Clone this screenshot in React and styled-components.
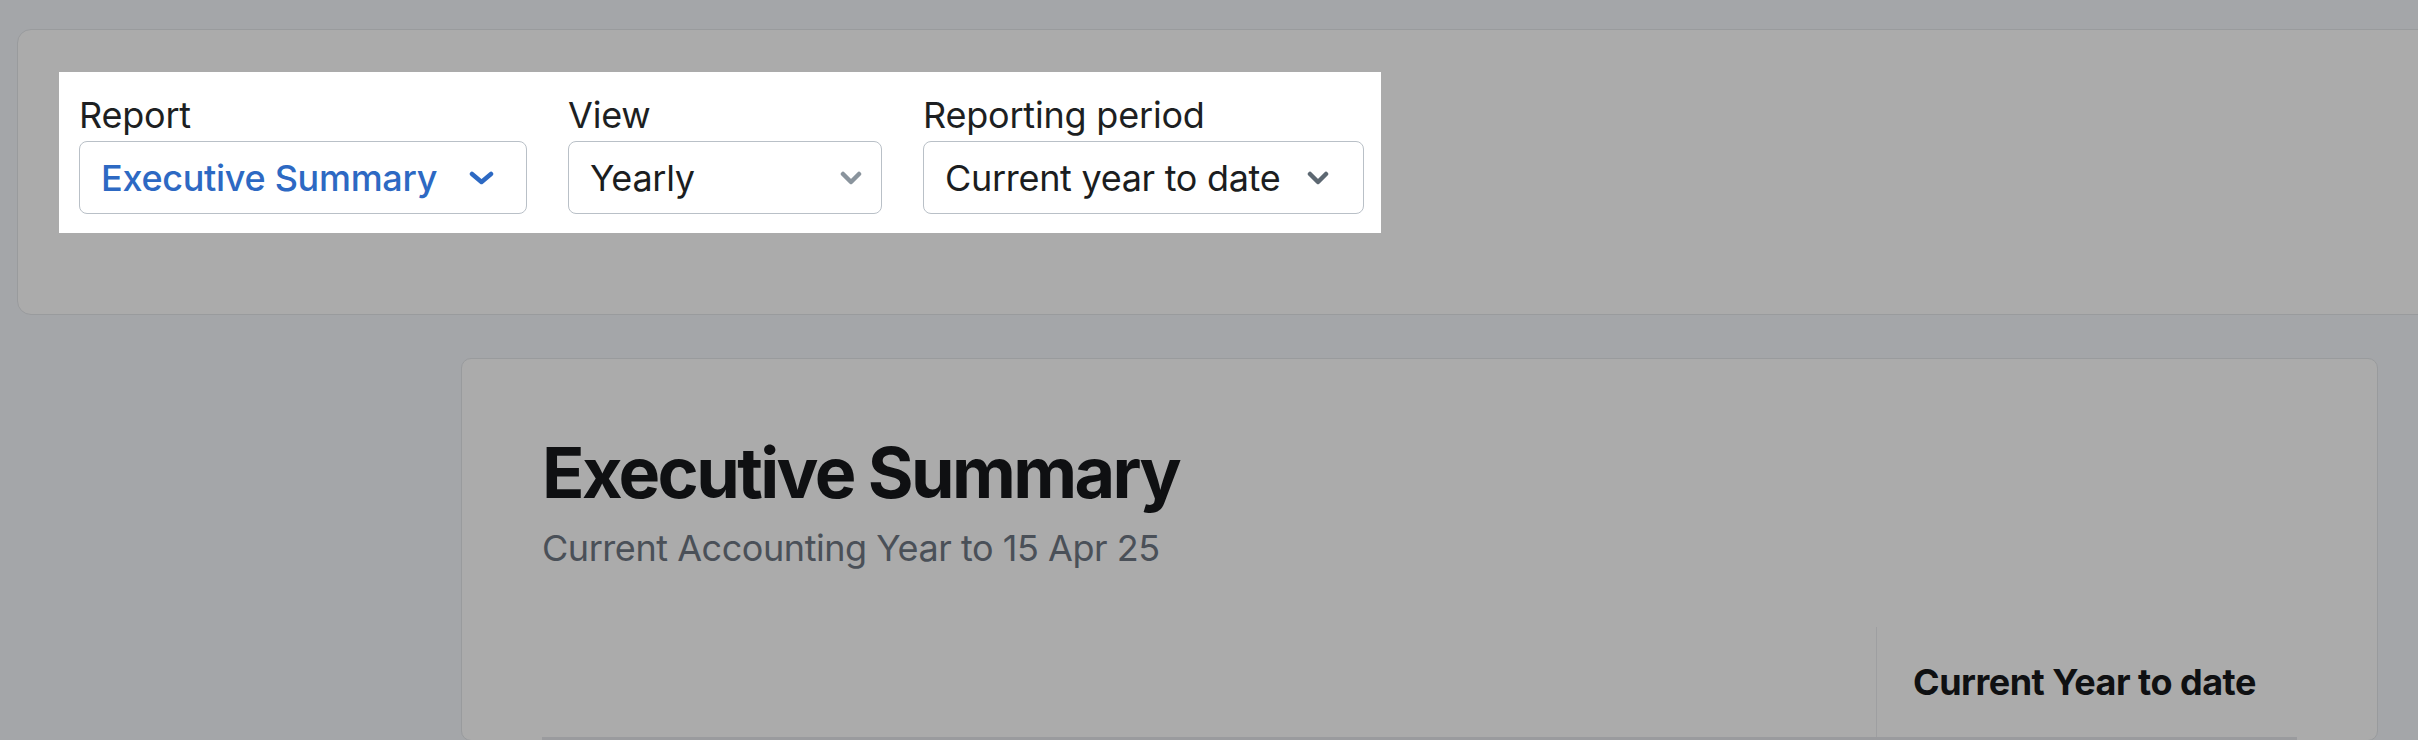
import React from 'react'
import styled, { createGlobalStyle } from 'styled-components'

const GlobalStyle = createGlobalStyle`
  html, body {
    margin: 0;
    padding: 0;
    overflow: hidden;
  }
  body {
    background: #f5f8fc;
    font-family: 'Inter', 'Noto Sans', sans-serif;
    color: #1b1d20;
  }
`

const Page = styled.div`
  min-height: 740px;
`

const FilterPanel = styled.section`
  box-sizing: border-box;
  height: 286px;
  margin: 29px -40px 0 17px;
  padding: 42px 41px;
  background: #ffffff;
  border: 1px solid #e4e7eb;
  border-radius: 14px;
`

// the highlighted block of a product tour: everything else is dimmed by its shadow
const Spotlight = styled.div`
  position: relative;
  z-index: 2;
  display: flex;
  gap: 41px;
  width: 1322px;
  box-sizing: border-box;
  padding: 21px 17px 19px 20px;
  background: #ffffff;
  box-shadow: 0 0 0 4000px rgba(0, 0, 0, 0.33);
`

const Field = styled.div`
  display: flex;
  flex-direction: column;
  gap: 4px;
  width: ${(p) => p.$width}px;
`

const Label = styled.label`
  font-size: 36px;
  line-height: 44px;
  letter-spacing: -0.2px;
  color: #1d1f22;
`

const Select = styled.div`
  box-sizing: border-box;
  height: 73px;
  display: flex;
  align-items: center;
  justify-content: space-between;
  padding: 0 ${(p) => p.$padRight}px 0 21px;
  border: 1.5px solid #b9c0c7;
  border-radius: 8px;
  background: #ffffff;
  font-size: 36px;
  letter-spacing: -0.3px;
  font-weight: ${(p) => (p.$accent ? 500 : 400)};
  color: ${(p) => (p.$accent ? '#2d69c3' : '#1b1d20')};
`

const Chevron = ({ color, width }) => (
  <svg width={width} height="14" viewBox={`0 0 ${width} 14`} fill="none">
    <path
      d={`M3 3 L${width / 2} 11 L${width - 3} 3`}
      stroke={color}
      strokeWidth="4.5"
      strokeLinecap="round"
      strokeLinejoin="round"
    />
  </svg>
)

const ReportCard = styled.section`
  margin: 43px 40px 0 461px;
  padding: 72px 80px 0;
  background: #ffffff;
  border: 1px solid #e4e7eb;
  border-radius: 10px;
`

const Title = styled.h1`
  margin: 0;
  font-size: 70px;
  line-height: 84px;
  font-weight: 700;
  letter-spacing: -2.6px;
  color: #17191c;
`

const Subtitle = styled.p`
  margin: 11px 0 0;
  font-size: 36px;
  line-height: 44px;
  letter-spacing: -0.45px;
  color: #6f7884;
`

const Table = styled.table`
  width: 100%;
  margin-top: 57px;
  border-collapse: collapse;
`

const HeadCell = styled.th`
  height: 110px;
  padding: 0 0 0 36px;
  text-align: left;
  font-size: 36px;
  font-weight: 700;
  letter-spacing: -0.5px;
  color: #17191c;
  border-bottom: 3px solid #e6e8ec;
  border-left: ${(p) => (p.$divider ? '1px solid #eceef1' : 'none')};
  width: ${(p) => (p.$width ? `${p.$width}px` : 'auto')};
`

const filters = [
  { label: 'Report', value: 'Executive Summary', width: 448, accent: true, pad: 32, chevron: '#2d69c3', cw: 25 },
  { label: 'View', value: 'Yearly', width: 314, pad: 19, chevron: '#8a949d', cw: 22 },
  { label: 'Reporting period', value: 'Current year to date', width: 441, pad: 34, chevron: '#5d6872', cw: 22 },
]

function App() {
  return (
    <Page>
      <GlobalStyle />
      <FilterPanel>
        <Spotlight>
          {filters.map((f) => (
            <Field key={f.label} $width={f.width}>
              <Label>{f.label}</Label>
              <Select $accent={f.accent} $padRight={f.pad}>
                <span>{f.value}</span>
                <Chevron color={f.chevron} width={f.cw} />
              </Select>
            </Field>
          ))}
        </Spotlight>
      </FilterPanel>

      <ReportCard>
        <Title>Executive Summary</Title>
        <Subtitle>Current Accounting Year to 15 Apr 25</Subtitle>
        <Table>
          <thead>
            <tr>
              <HeadCell />
              <HeadCell $divider $width={384}>Current Year to date</HeadCell>
            </tr>
          </thead>
        </Table>
      </ReportCard>
    </Page>
  )
}

export default App
